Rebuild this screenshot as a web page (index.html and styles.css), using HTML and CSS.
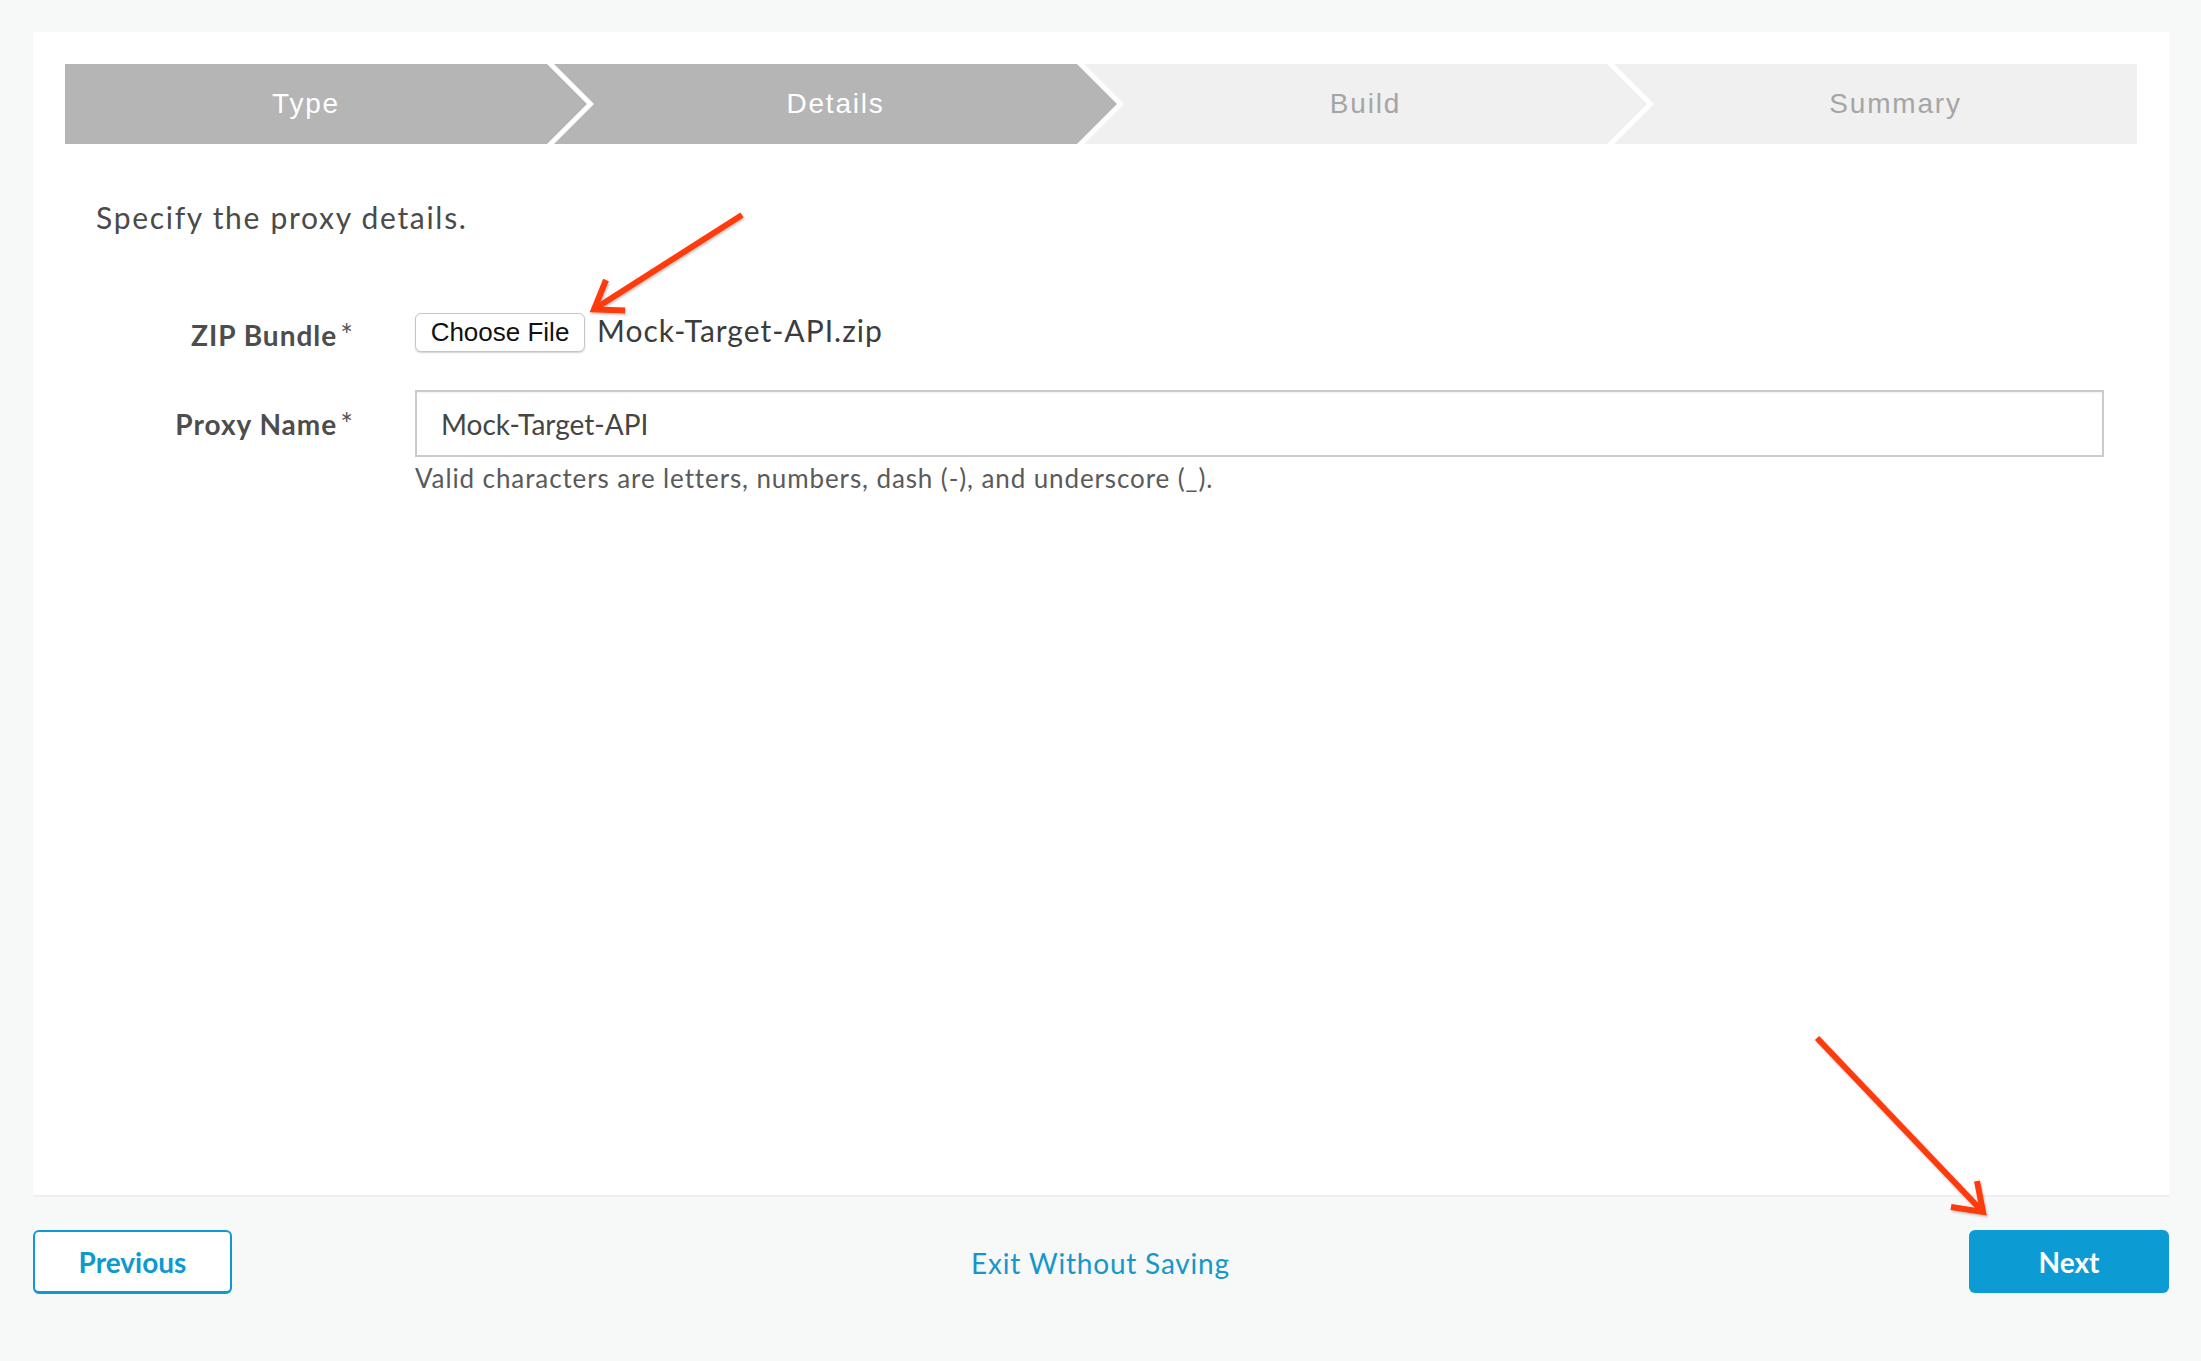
FILE: index.html
```html
<!DOCTYPE html>
<html lang="en">
<head>
<meta charset="utf-8">
<title>Proxy details</title>
<link rel="stylesheet" href="styles.css">
</head>
<body>
<div class="page">
  <main class="card">
    <ol class="steps">
      <li class="step step-first done">Type</li>
      <li class="step step-mid done">Details</li>
      <li class="step step-mid">Build</li>
      <li class="step step-last">Summary</li>
    </ol>

    <p class="intro">Specify the proxy details.</p>

    <div class="form">
      <div class="label">ZIP Bundle<span class="req">*</span></div>
      <div class="field file-field">
        <button type="button" class="choose">Choose File</button>
        <span class="file-name">Mock-Target-API.zip</span>
      </div>

      <div class="label label-proxy">Proxy Name<span class="req">*</span></div>
      <div class="field field-proxy">
        <input class="text-input" type="text" value="Mock-Target-API">
        <div class="help">Valid characters are letters, numbers, dash (-), and underscore (_).</div>
      </div>
    </div>
  </main>

  <footer class="footer">
    <button type="button" class="btn btn-outline">Previous</button>
    <a class="exit" href="#">Exit Without Saving</a>
    <button type="button" class="btn btn-primary">Next</button>
  </footer>
</div>

<svg class="annotations" width="2201" height="1361" viewBox="0 0 2201 1361" aria-hidden="true">
  <defs>
    <filter id="sh" x="-10%" y="-10%" width="120%" height="120%">
      <feDropShadow dx="1" dy="1.5" stdDeviation="1.2" flood-color="#000" flood-opacity="0.25"/>
    </filter>
  </defs>
  <g fill="none" stroke="#fd3b0c" stroke-width="6" stroke-linejoin="miter" stroke-linecap="butt" filter="url(#sh)">
    <line x1="742" y1="215" x2="596" y2="308"/>
    <polyline points="606,280 594,309.5 625,310.5"/>
    <line x1="1817" y1="1038" x2="1981" y2="1210"/>
    <polyline points="1977,1181 1983,1212 1951,1207"/>
  </g>
</svg>
</body>
</html>
```

FILE: styles.css
```css
html, body {
  margin: 0;
  padding: 0;
}

body {
  background: #f7f8f8;
  font-family: Lato, "Open Sans", "Liberation Sans", sans-serif;
  color: #444;
  position: relative;
}

.page {
  min-height: 100vh;
  display: flex;
  flex-direction: column;
  padding: 32px 32px 0 33px;
  box-sizing: border-box;
}

.card {
  flex: 1;
  background: #fff;
  border-bottom: 2px solid #efefef;
  padding: 32px;
  box-sizing: border-box;
}

/* Step bar */
.steps {
  list-style: none;
  margin: 0;
  padding: 0;
  display: flex;
  height: 80px;
}

.step {
  height: 80px;
  display: flex;
  align-items: center;
  justify-content: center;
  box-sizing: border-box;
  background: #f0f0f0;
  color: #a5a5a5;
  font-family: "Liberation Sans", Arial, sans-serif;
  font-size: 28px;
  letter-spacing: 1.8px;
  flex: none;
}

.step.done {
  background: #b5b5b5;
  color: #fff;
}

.step-first {
  width: 522px;
  padding-right: 40px;
  clip-path: polygon(0 0, calc(100% - 40px) 0, 100% 50%, calc(100% - 40px) 100%, 0 100%);
}

.step-mid {
  width: 563px;
  margin-left: -33px;
  padding: 0 40px;
  clip-path: polygon(0 0, calc(100% - 40px) 0, 100% 50%, calc(100% - 40px) 100%, 0 100%, 40px 50%);
}

.step-last {
  flex: 1;
  margin-left: -33px;
  padding-left: 40px;
  clip-path: polygon(0 0, 100% 0, 100% 100%, 0 100%, 40px 50%);
}

/* Intro */
.intro {
  margin: 56px 0 0 31px;
  font-size: 30px;
  line-height: 34px;
  letter-spacing: 1.7px;
  color: #4a4a4a;
}

/* Form */
.form {
  margin-top: 79px;
  display: grid;
  grid-template-columns: 288px 1fr;
  column-gap: 62px;
  padding-right: 33px;
}

.label {
  font-weight: 700;
  font-size: 28px;
  letter-spacing: 1px;
  color: #4d4d4d;
  text-align: right;
  display: flex;
  align-items: center;
  justify-content: flex-end;
  height: 39px;
  margin-top: 2px;
}

.req {
  font-weight: 400;
  font-size: 30px;
  margin-left: 3px;
  letter-spacing: 0;
  color: #555;
  position: relative;
  top: -1px;
}

.file-field {
  display: flex;
  align-items: center;
  height: 39px;
}

.choose {
  height: 39px;
  width: 170px;
  box-sizing: border-box;
  padding: 0;
  background: #fff;
  border: 1px solid #c6c6c6;
  border-radius: 6px;
  box-shadow: 0 1px 1.5px rgba(0, 0, 0, 0.18);
  font-family: "Liberation Sans", Arial, sans-serif;
  font-size: 26px;
  color: #111;
}

.file-name {
  margin-left: 12px;
  font-size: 30px;
  letter-spacing: 1px;
  color: #3c3c3c;
  position: relative;
  top: -3px;
}

.label-proxy {
  margin-top: 36px;
  height: 67px;
}

.field-proxy {
  margin-top: 36px;
}

.text-input {
  display: block;
  width: 100%;
  height: 67px;
  box-sizing: border-box;
  border: 2px solid #cbcbcb;
  box-shadow: inset 0 1px 2px rgba(0, 0, 0, 0.06);
  padding: 0 0 0 24px;
  margin: 0;
  font-family: Lato, "Open Sans", sans-serif;
  font-size: 28px;
  color: #454545;
  background: #fff;
  outline: none;
}

.help {
  margin-top: 5px;
  font-size: 26px;
  line-height: 32px;
  letter-spacing: 0.9px;
  color: #5a5a5a;
}

/* Footer */
.footer {
  height: 164px;
  display: flex;
  justify-content: space-between;
  align-items: flex-start;
  padding-top: 33px;
  box-sizing: border-box;
}

.btn {
  height: 64px;
  width: 200px;
  box-sizing: border-box;
  border-radius: 6px;
  font-family: Lato, "Open Sans", sans-serif;
  font-weight: 700;
  font-size: 28px;
  padding: 0;
}

.btn-outline {
  width: 199px;
  background: #fff;
  color: #0e9ad0;
  border: 2px solid #0e9ad0;
  border-bottom-width: 3px;
}

.btn-primary {
  height: 63px;
  background: #0c9bd2;
  color: #fff;
  border: none;
}

.exit {
  align-self: flex-start;
  margin-top: 16px;
  font-size: 28px;
  line-height: 34px;
  letter-spacing: 0.8px;
  color: #1597cc;
  text-decoration: none;
}

/* Annotation overlay */
.annotations {
  position: absolute;
  top: 0;
  left: 0;
  pointer-events: none;
}
```
